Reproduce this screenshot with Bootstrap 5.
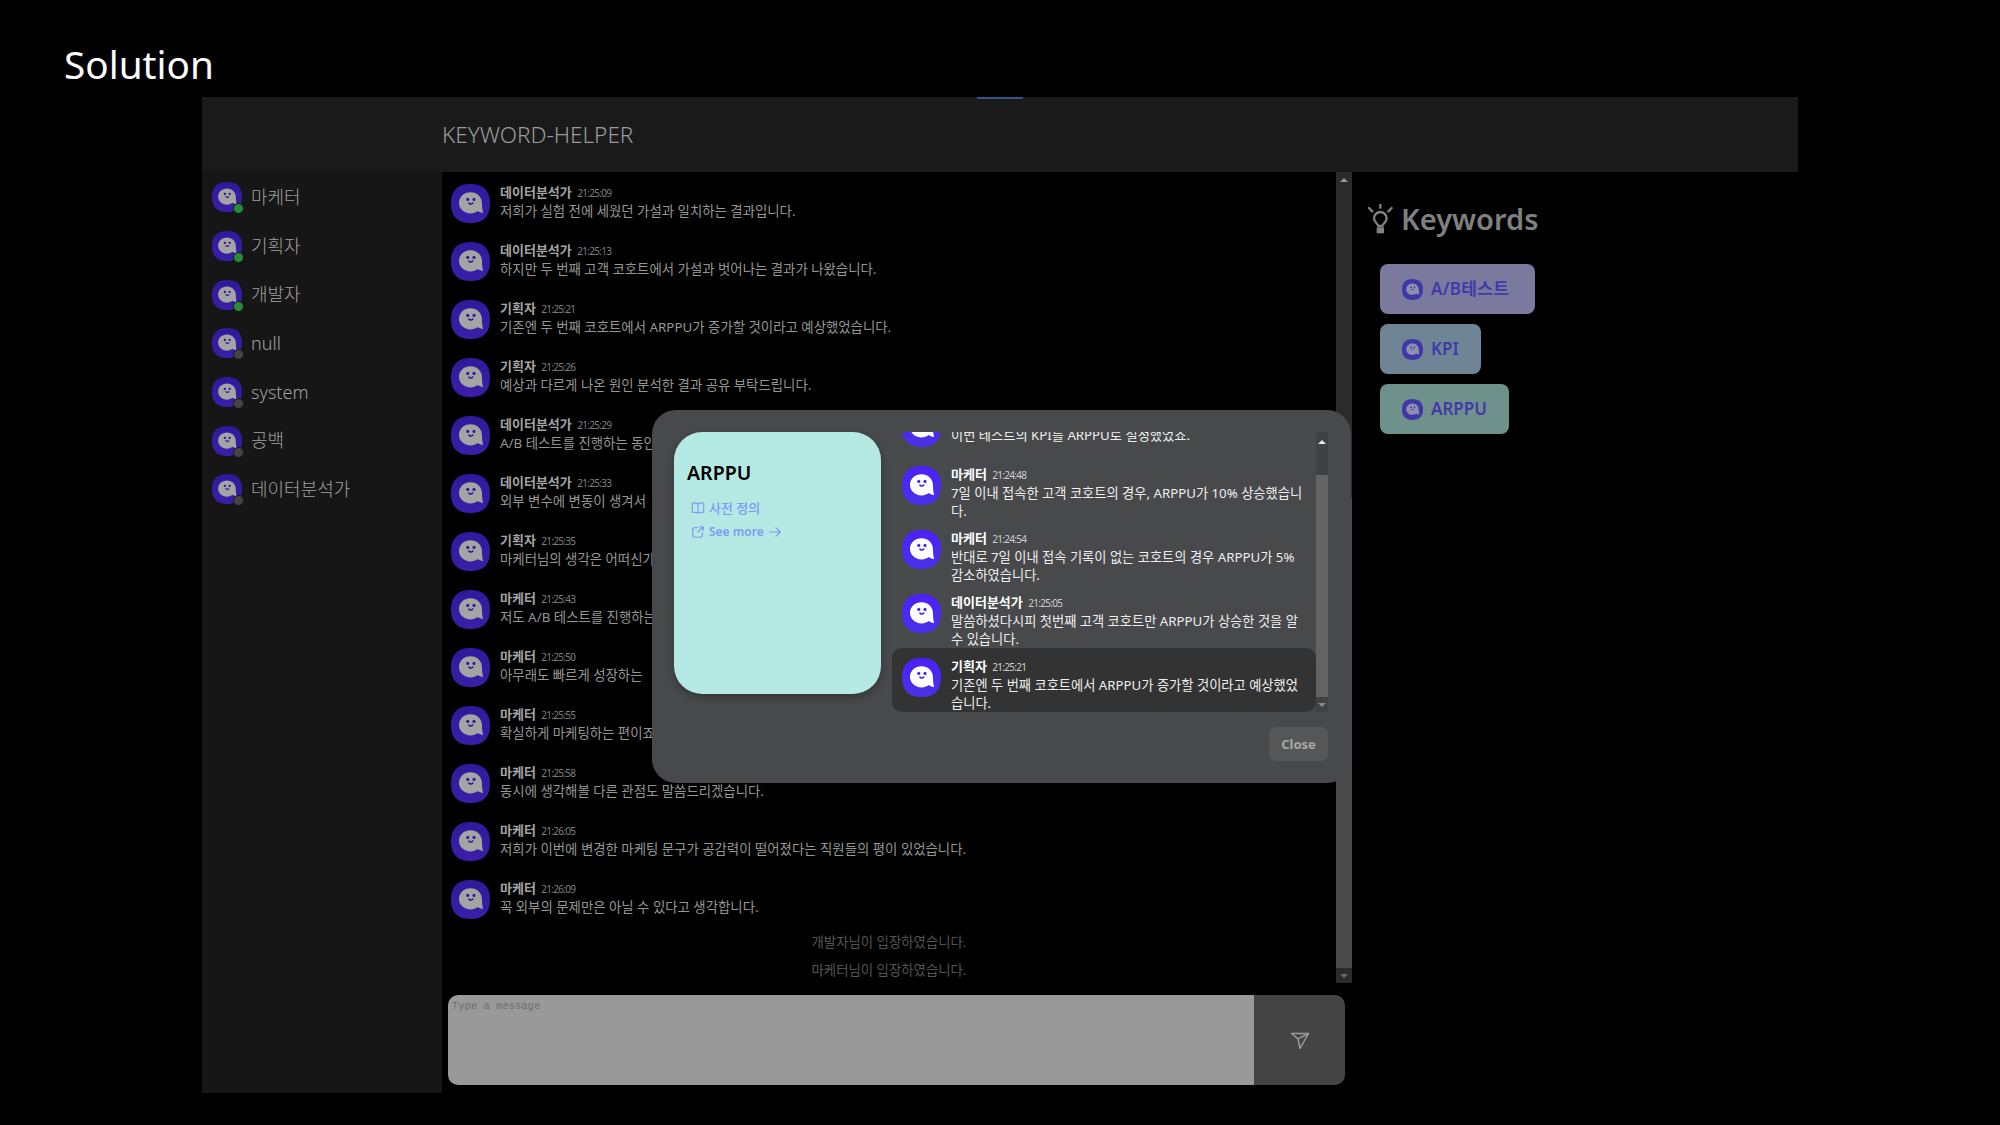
<!DOCTYPE html>
<html lang="ko">
<head>
  <meta charset="UTF-8" />
  <title>Solution</title>
  <link href="https://cdn.jsdelivr.net/npm/bootstrap@5.3.0/dist/css/bootstrap.min.css" rel="stylesheet">
  <style>
    body {
      background: #000;
      font-family: "Noto Sans", "Noto Sans CJK KR", sans-serif;
      height: 1125px;
      overflow: hidden;
    }
    .page-title { height: 97px; padding: 39px 0 0 64px; margin: 0; color: #fff; font-size: 38.7px; line-height: 50px; font-weight: 400; }
    .panel { position: relative; width: 1596px; height: 996px; margin-left: 202px; }
    .panel-head { height: 75px; background: #1a1a1a; padding-left: 240px; color: #9a9a9a; font-size: 22.5px; font-weight: 300; line-height: 75px; }
    .tab-mark { position: absolute; left: 775px; top: 0; width: 46px; height: 2px; background: #27598c; }
    .panel-body { height: 921px; }

    .side-list { width: 240px; background: #161616; padding: 1px 0 0 10px; }
    .side-item { height: 48.7px; color: #a0a0a0; font-size: 18px; font-weight: 300; gap: 9px; }
    .ava-wrap { position: relative; width: 30px; height: 30px; }
    .ava-wrap svg { width: 30px; height: 30px; display: block; }
    .status-dot { position: absolute; right: -2px; bottom: -2px; width: 11px; height: 11px; border-radius: 50%; border: 1px solid #161616; background: #444; }
    .status-dot.on { background: #2a8a3c; }

    .chat-col { width: 910px; }
    .chat-main { height: 811px; background: #000; }
    .chat-list { padding-top: 2px; overflow: hidden; }
    .msg-row { height: 58px; padding: 10px 0 0 9px; gap: 10px; }
    .ava-img { width: 39px; height: 39px; flex: none; display: block; }
    .msg-text { margin-top: -1px; }
    .msg-line { font-size: 13.4px; line-height: 18px; color: #969696; white-space: nowrap; }
    .msg-name { font-size: 13px; font-weight: 700; line-height: 18px; color: #a4a4a4; }
    .msg-time { font-size: 10px; font-weight: 400; color: #808080; margin-left: 2px; letter-spacing: -.7px; }
    .sys-line { height: 28px; line-height: 28px; text-align: center; font-size: 13.4px; color: #555; }

    .sbar { width: 16px; background: #2b2b2b; }
    .sbar-arrow { height: 15px; flex: none; }
    .sbar-thumb { background: #4a4a4a; }
    .tri-up { width: 0; height: 0; border: 4px solid transparent; border-top: 0; border-bottom: 4px solid #999; }
    .tri-down { width: 0; height: 0; border: 4px solid transparent; border-bottom: 0; border-top: 4px solid #666; }

    .input-box { width: 897px; height: 90px; margin: 12px 0 0 6px; border-radius: 10px; overflow: hidden; }
    .input-box textarea.form-control {
      background: #999; border: 0; border-radius: 0; height: 90px; padding: 3px 4px; resize: none;
      font-family: "Liberation Mono", monospace; font-size: 10.5px; line-height: 16px;
    }
    .input-box textarea::placeholder { color: #6e6e6e; }
    .send-btn { width: 91px; flex: none; background: #444; }
    .send-btn svg { width: 20px; height: 20px; }

    .kw-col { flex: 1; padding: 27px 0 0 16px; }
    .kw-title { color: #808080; font-size: 29px; font-weight: 600; line-height: 40px; margin: 0 0 25px; gap: 8px; }
    .kw-title svg { width: 25px; height: 30px; }
    .kw-chip {
      height: 50px; padding: 0 22px; margin: 0 0 10px 12px; border: 0; border-radius: 8px;
      color: #3f3aa8; font-size: 17px; font-weight: 600; gap: 8px;
    }
    .kw-chip svg { width: 21px; height: 21px; }
    .chip-a { background: #7b7a9e; width: 155px; white-space: nowrap; letter-spacing: .3px; }
    .chip-b { background: #6f8595; }
    .chip-c { background: #6f918c; }

    .kw-modal.modal-content {
      position: absolute; left: 450px; top: 313px; width: 699px; height: 373px;
      background: #48494b; border: 0; border-radius: 24px; padding: 22px 23px 22px 22px;
    }
    .kw-card.card { width: 207px; height: 262px; flex: none; background: #b5e9e3; border: 0; border-radius: 28px; padding: 27px 13px; box-shadow: 0 3px 8px rgba(0,0,0,.3); }
    .kw-card h5 { color: #000; font-size: 19.5px; font-weight: 600; line-height: 28px; margin: 0 0 9px; }
    .kw-link { color: #7a9bf5; font-size: 12px; font-weight: 600; line-height: 24px; text-decoration: none; gap: 4px; padding-left: 4px; }
    .kw-link.ko { font-size: 13px; font-weight: 500; }
    .kw-link svg { width: 14px; height: 14px; }
    .kw-thread { width: 436px; height: 280px; margin-left: 11px; }
    .thread-list { overflow: hidden; justify-content: flex-end; }
    .thread-row { flex: none; height: 64px; padding: 10px 8px 0 10px; gap: 10px; }
    .thread-row.short { height: 58px; }
    .thread-row.active { background: #333; border-radius: 10px; }
    .thread-row .msg-line { color: #eee; font-size: 13.25px; white-space: normal; word-break: break-all; }
    .thread-row .msg-name { color: #fff; }
    .thread-row .msg-time { color: #d0d0d0; }
    .thread-bar { width: 14px; background: #404142; }
    .thread-bar .sbar-thumb { background: #636363; height: 222px; }
    .thread-bar .tri-up { border-bottom-color: #e8e8e8; }
    .thread-bar .tri-down { border-top-color: #8a8a8a; }
    .thread-top { height: 43px; flex: none; }
    .close-btn.btn { width: 59px; height: 34px; padding: 1px 0 0; margin-top: 15px; background: #565656; border: 0; border-radius: 6px; color: #a8a8a8; font-size: 13px; font-weight: 700; }
    .ava-dim { --av-bg: url(#gradDim); --av-fg: #a4a4a4; --av-eye: #2f1a9a; }
    .ava-lit { --av-bg: url(#gradLit); --av-fg: #fff; --av-eye: #4622f0; }
    .ava-chip { --av-bg: #4038a8; --av-fg: #8f90ad; --av-eye: #4038a8; }
  </style>
</head>
<body>
  <svg width="0" height="0" class="position-absolute">
    <defs>
      <linearGradient id="gradDim" x1="0" y1="0" x2="0" y2="1">
        <stop offset="0" stop-color="#2e1a9c" /><stop offset="1" stop-color="#3a1fa8" />
      </linearGradient>
      <linearGradient id="gradLit" x1="0" y1="0" x2="0" y2="1">
        <stop offset="0" stop-color="#4a20fa" /><stop offset="1" stop-color="#4a32e6" />
      </linearGradient>
      <symbol id="ghost" viewBox="0 0 40 40">
        <path fill="var(--av-bg)" d="M20 0C33.5 0 40 7 40 20S33.5 40 20 40 0 33 0 20 6.500 0 20 0Z" />
        <path fill="var(--av-fg)" d="M20 8.500c6.800 0 11.800 5 11.800 11.400 0 3 .2 6.600 1.200 9.800-2.200-.1-4.300-.9-5.600-1.900-2 1.500-4.600 2.400-7.400 2.400-6.800 0-11.800-4.900-11.800-10.900S13.200 8.500 20 8.500Z" />
        <circle fill="var(--av-eye)" cx="17.200" cy="15.800" r="1.600" />
        <circle fill="var(--av-eye)" cx="23.600" cy="15.800" r="1.600" />
        <path fill="none" stroke="var(--av-eye)" stroke-width="1.600" stroke-linecap="round" d="M18.400 19.600c1.100 1.100 2.700 1.100 3.900 0" />
      </symbol>
    </defs>
  </svg>

  <h1 class="page-title">Solution</h1>

  <div class="panel">
    <div class="tab-mark"></div>
    <div class="panel-head">KEYWORD-HELPER</div>
    <div class="panel-body d-flex">
      <!-- 참여자 목록 -->
      <div class="side-list" id="side-list"></div>

      <!-- 채팅 영역 -->
      <div class="chat-col">
        <div class="chat-main d-flex">
          <div class="chat-list flex-grow-1" id="chat-list"></div>
          <div class="sbar d-flex flex-column">
            <div class="sbar-arrow d-flex align-items-center justify-content-center"><div class="tri-up"></div></div>
            <div class="flex-grow-1"></div>
            <div class="sbar-thumb" style="height:470px"></div>
            <div class="sbar-arrow d-flex align-items-center justify-content-center"><div class="tri-down"></div></div>
          </div>
        </div>
        <div class="input-box d-flex">
          <textarea class="form-control" placeholder="Type a message"></textarea>
          <div class="send-btn d-flex align-items-center justify-content-center">
            <svg viewBox="0 0 20 20" fill="none" stroke="#9a9a9a" stroke-width="1.500" stroke-linejoin="round"><path d="M1.500 3.500H18.500L10 18.500 8 8.800Z" /><path d="M8 8.800 18.500 3.500" /></svg>
          </div>
        </div>
      </div>

      <!-- 키워드 -->
      <div class="kw-col">
        <h2 class="kw-title d-flex align-items-center">
          <svg viewBox="0 0 75 90" fill="none" stroke="#808080" stroke-width="7" stroke-linecap="round">
            <path d="M37 2V11M3 12 13 22M71 12 61 22" />
            <path d="M31 66C29 58 18 55 18 43A19 19 0 0 1 56 43C56 55 45 58 43 66Z" />
            <rect x="26" y="70" width="22" height="18" fill="#808080" stroke="none" />
          </svg>
          Keywords
        </h2>
        <div class="d-flex flex-column align-items-start">
          <button class="kw-chip chip-a d-flex align-items-center ava-chip"><svg><use href="#ghost" /></svg>A/B테스트</button>
          <button class="kw-chip chip-b d-flex align-items-center ava-chip"><svg><use href="#ghost" /></svg>KPI</button>
          <button class="kw-chip chip-c d-flex align-items-center ava-chip"><svg><use href="#ghost" /></svg>ARPPU</button>
        </div>
      </div>
    </div>

    <!-- 키워드 상세 모달 -->
    <div class="kw-modal modal-content">
      <div class="d-flex">
        <div class="kw-card card">
          <h5>ARPPU</h5>
          <a class="kw-link ko d-flex align-items-center" href="#">
            <svg viewBox="0 0 16 16" fill="none" stroke="#7a9bf5" stroke-width="1.300"><path d="M8 3.500C6.500 2.300 4 2 1.500 2.300V13C4 12.700 6.500 13 8 14.200 9.500 13 12 12.700 14.500 13V2.300C12 2 9.500 2.300 8 3.500ZM8 3.500V14.200" /></svg>
            사전 정의
          </a>
          <a class="kw-link d-flex align-items-center" href="#">
            <svg viewBox="0 0 16 16" fill="none" stroke="#7a9bf5" stroke-width="1.400" stroke-linecap="round" stroke-linejoin="round"><path d="M7 3H4.500A2.500 2.500 0 0 0 2 5.500V11.500A2.500 2.500 0 0 0 4.500 14H10.500A2.500 2.500 0 0 0 13 11.500V9" /><path d="M8 8 14 2M10 2H14V6" /></svg>
            See more
            <svg viewBox="0 0 16 16" fill="none" stroke="#7a9bf5" stroke-width="1.300" stroke-linecap="round" stroke-linejoin="round"><path d="M2 8H14M9 3 14 8 9 13" /></svg>
          </a>
        </div>
        <div class="kw-thread d-flex">
          <div class="thread-list d-flex flex-column flex-grow-1" id="thread-list"></div>
          <div class="thread-bar sbar d-flex flex-column">
            <div class="thread-top d-flex justify-content-center pt-2"><div class="tri-up"></div></div>
            <div class="sbar-thumb"></div>
            <div class="flex-grow-1 d-flex align-items-center justify-content-center"><div class="tri-down"></div></div>
          </div>
        </div>
      </div>
      <div class="d-flex justify-content-end">
        <button class="close-btn btn" type="button">Close</button>
      </div>
    </div>
  </div>

  <script src="https://cdn.jsdelivr.net/npm/bootstrap@5.3.0/dist/js/bootstrap.bundle.min.js"></script>
  <script>
    const people = [
      ['마케터', true], ['기획자', true], ['개발자', true], ['null', false],
      ['system', false], ['공백', false], ['데이터분석가', false]
    ];
    const chat = [
      ['데이터분석가', '21:25:09', '저희가 실험 전에 세웠던 가설과 일치하는 결과입니다.'],
      ['데이터분석가', '21:25:13', '하지만 두 번째 고객 코호트에서 가설과 벗어나는 결과가 나왔습니다.'],
      ['기획자', '21:25:21', '기존엔 두 번째 코호트에서 ARPPU가 증가할 것이라고 예상했었습니다.'],
      ['기획자', '21:25:26', '예상과 다르게 나온 원인 분석한 결과 공유 부탁드립니다.'],
      ['데이터분석가', '21:25:29', 'A/B 테스트를 진행하는 동안'],
      ['데이터분석가', '21:25:33', '외부 변수에 변동이 생겨서'],
      ['기획자', '21:25:35', '마케터님의 생각은 어떠신가요?'],
      ['마케터', '21:25:43', '저도 A/B 테스트를 진행하는'],
      ['마케터', '21:25:50', '아무래도 빠르게 성장하는'],
      ['마케터', '21:25:55', '확실하게 마케팅하는 편이죠'],
      ['마케터', '21:25:58', '동시에 생각해볼 다른 관점도 말씀드리겠습니다.'],
      ['마케터', '21:26:05', '저희가 이번에 변경한 마케팅 문구가 공감력이 떨어졌다는 직원들의 평이 있었습니다.'],
      ['마케터', '21:26:09', '꼭 외부의 문제만은 아닐 수 있다고 생각합니다.']
    ];
    const thread = [
      ['마케터', '21:24:40', '이번 테스트의 KPI를 ARPPU로 설정했었죠.', 'short'],
      ['마케터', '21:24:48', '7일 이내 접속한 고객 코호트의 경우, ARPPU가 10% 상승했습니다.', ''],
      ['마케터', '21:24:54', '반대로 7일 이내 접속 기록이 없는 코호트의 경우 ARPPU가 5% 감소하였습니다.', ''],
      ['데이터분석가', '21:25:05', '말씀하셨다시피 첫번째 고객 코호트만 ARPPU가 상승한 것을 알 수 있습니다.', ''],
      ['기획자', '21:25:21', '기존엔 두 번째 코호트에서 ARPPU가 증가할 것이라고 예상했었습니다.', 'active']
    ];

    function ghost(cls, extra) {
      return `<svg class="${cls} ${extra}"><use href="#ghost" /></svg>`;
    }
    function msgBody(m) {
      return `<div class="msg-text"><div class="msg-name">${m[0]} <span class="msg-time">${m[1]}</span></div><div class="msg-line">${m[2]}</div></div>`;
    }

    document.getElementById('side-list').innerHTML = people.map(p =>
      `<div class="side-item d-flex align-items-center">
        <div class="ava-wrap ava-dim">${ghost('', '')}<span class="status-dot ${p[1] ? 'on' : ''}"></span></div>
        <span>${p[0]}</span>
      </div>`).join('');

    document.getElementById('chat-list').innerHTML = chat.map(m =>
      `<div class="msg-row d-flex">${ghost('ava-img', 'ava-dim')}${msgBody(m)}</div>`).join('')
      + '<div class="sys-line">개발자님이 입장하였습니다.</div><div class="sys-line">마케터님이 입장하였습니다.</div>';

    document.getElementById('thread-list').innerHTML = thread.map(m =>
      `<div class="thread-row d-flex ${m[3]}">${ghost('ava-img', 'ava-lit')}${msgBody(m)}</div>`).join('');
  </script>
</body>
</html>
